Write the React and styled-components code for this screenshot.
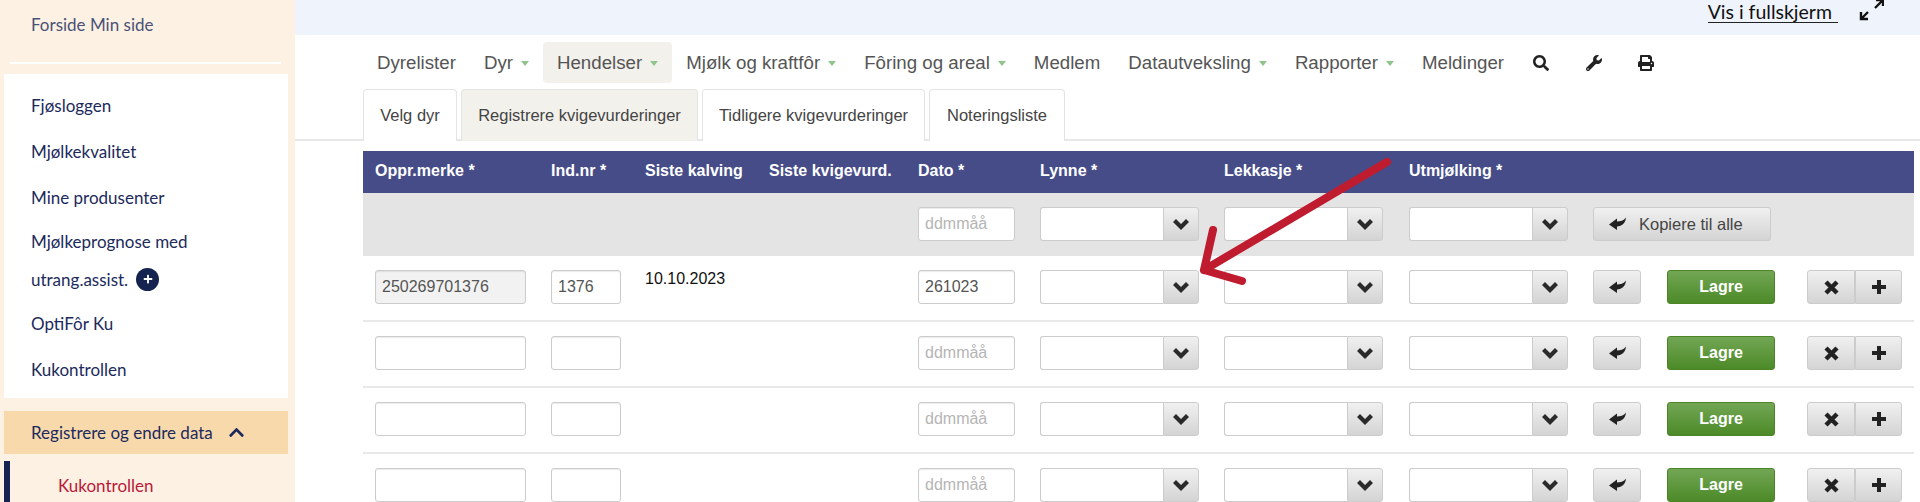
import React from "react";
import styled, { createGlobalStyle } from "styled-components";
import { FaSearch, FaWrench, FaPrint, FaPlus, FaChevronUp } from "react-icons/fa";

const GlobalStyle = createGlobalStyle`
  html, body { margin: 0; padding: 0; height: 100%; overflow: hidden; background: #fff; }
  * { box-sizing: border-box; }
`;

const Page = styled.div`
  position: relative;
  display: flex;
  width: 1920px;
  height: 502px;
  overflow: hidden;
  font-family: "Liberation Sans", Arial, sans-serif;
`;

// Sidebar
const Sidebar = styled.aside`
  width: 295px;
  flex-shrink: 0;
  background: #fdf1e3;
  padding: 0 7px 0 4px;
  font-family: Lato, "Noto Sans", sans-serif;
  font-size: 17px;
  color: #1c2a5c;
`;

const TopLink = styled.div`
  height: 62px;
  padding: 16px 0 0 27px;
  line-height: 18px;
  color: #4a5278;
`;

const Divider = styled.div`
  height: 2px;
  margin: 0 7px 10px 6px;
  background: #fff;
`;

const SideCard = styled.div`
  background: #fff;
  padding: 8px 0 0 27px;
  height: 324px;
  margin-bottom: 13px;
`;

const SideItem = styled.div`
  height: ${(p) => p.$h || 46}px;
  padding-bottom: ${(p) => p.$pb || 0}px;
  display: flex;
  align-items: center;
  gap: 8px;
`;

const PlusDot = styled.span`
  display: inline-flex;
  align-items: center;
  justify-content: center;
  width: 23px;
  height: 23px;
  border-radius: 50%;
  background: #14234f;
  color: #fff;
  font-size: 10px;
`;

const OpenGroup = styled.div`
  height: 43px;
  background: #f8d9ac;
  padding-left: 27px;
  display: flex;
  align-items: center;
  gap: 15px;
  margin-bottom: 7px;
`;

const ActiveItem = styled.div`
  height: 60px;
  border-left: 6px solid #14234f;
  padding: 14px 0 0 48px;
  color: #b8193a;
`;

// Main
const Main = styled.main`
  flex: 1;
  min-width: 0;
`;

const TopStrip = styled.div`
  height: 35px;
  background: #eef3fc;
  display: flex;
  justify-content: flex-end;
  align-items: flex-start;
  padding-right: 36px;
  gap: 20px;
`;

const FullscreenLink = styled.a`
  font-family: Lato, sans-serif;
  font-size: 19.5px;
  line-height: 24px;
  height: 23px;
  padding-right: 6px;
  color: #111;
  border-bottom: 1.5px solid #222;
  text-decoration: none;
`;

const NavBar = styled.nav`
  display: flex;
  align-items: center;
  height: 41px;
  margin: 7px 0 6px 68px;
  font-size: 18.7px;
  color: #555;
`;

const NavItem = styled.div`
  height: 41px;
  display: flex;
  align-items: center;
  gap: 8px;
  padding: 0 14px;
  border-radius: 4px;
  background: ${(p) => (p.$active ? "#f3f1ec" : "transparent")};
`;

const Caret = styled.span`
  width: 0;
  height: 0;
  border-left: 4.5px solid transparent;
  border-right: 4.5px solid transparent;
  border-top: 5px solid #8fc48a;
  margin-top: 2px;
`;

const NavIcon = styled.span`
  display: inline-flex;
  margin-left: ${(p) => p.$ml}px;
  color: #222;
  font-size: 16px;
`;

const TabBar = styled.div`
  display: flex;
  gap: 4px;
  height: 52px;
  padding-left: 68px;
  border-bottom: 2px solid #e8e8e8;
`;

const Tab = styled.div`
  height: 52px;
  width: ${(p) => p.$w}px;
  display: flex;
  align-items: center;
  justify-content: center;
  font-size: 16.5px;
  color: #444;
  background: ${(p) => (p.$active ? "#f3f1ec" : "#fff")};
  border: 1px solid #e4e4e4;
  border-bottom: none;
  border-radius: 4px 4px 0 0;
`;

const Table = styled.div`
  margin: 10px 6px 0 68px;
`;

const columns = "176px 94px 124px 149px 122px 184px 185px 184px 1fr";

const HeadRow = styled.div`
  display: grid;
  grid-template-columns: ${columns};
  height: 42px;
  padding: 0 0 2px 12px;
  align-items: center;
  background: #464c88;
  color: #fff;
  font-size: 16px;
  font-weight: bold;
`;

const Row = styled.div`
  display: grid;
  grid-template-columns: ${columns};
  height: ${(p) => (p.$gray ? 63 : 66)}px;
  padding: 14px 0 0 12px;
  align-items: start;
  background: ${(p) => (p.$gray ? "#e4e4e4" : "#fff")};
  border-bottom: ${(p) => (p.$gray ? "none" : "2px solid #e8e8e8")};
`;

const Input = styled.input`
  height: 34px;
  width: ${(p) => p.$w}px;
  padding: 0 6px;
  font: 16px "Liberation Sans", Arial, sans-serif;
  color: #555;
  background: ${(p) => (p.$readonly ? "#f2f2f2" : "#fff")};
  border: 1px solid #ccc;
  border-radius: 3px;
  box-shadow: inset 0 1px 1px rgba(0, 0, 0, 0.08);
  &::placeholder { color: #b5b5b5; opacity: 1; }
`;

const DateText = styled.div`
  font-size: 16px;
  color: #111;
  line-height: 18px;
`;

const SelectBox = styled.div`
  display: flex;
  width: 159px;
  height: 34px;
`;

const SelectInput = styled.div`
  flex: 1;
  background: #fff;
  border: 1px solid #ccc;
  border-right: none;
  border-radius: 3px 0 0 3px;
`;

const GrayButton = styled.button`
  display: inline-flex;
  align-items: center;
  justify-content: ${(p) => (p.$start ? "flex-start" : "center")};
  gap: 13px;
  height: 34px;
  width: ${(p) => p.$w}px;
  padding: 0 0 0 ${(p) => (p.$start ? 15 : 0)}px;
  flex-shrink: 0;
  font: 16.5px "Liberation Sans", Arial, sans-serif;
  color: #444;
  background: linear-gradient(#f0f0f0, #d4d4d4);
  border: 1px solid #ccc;
  border-radius: ${(p) => p.$radius || "3px"};
`;

const SaveButton = styled.button`
  height: 34px;
  width: 108px;
  margin: 0 32px 0 26px;
  flex-shrink: 0;
  font: bold 16px "Liberation Sans", Arial, sans-serif;
  color: #fff;
  background: linear-gradient(#72a654, #4c8a28);
  border: 1px solid #4c8428;
  border-radius: 3px;
`;

const Actions = styled.div`
  display: flex;
`;

const Arrow = styled.svg`
  position: absolute;
  left: 0;
  top: 0;
  pointer-events: none;
`;

// Glyph icons, drawn because the icon packs have thinner ones
const ChevronGlyph = () => (
  <svg width="16" height="11" viewBox="0 0 16 11" fill="#2a2a2a">
    <polygon points="0,3 3,0 8,5 13,0 16,3 8,11" />
  </svg>
);

const BackGlyph = () => (
  <svg width="17" height="14" viewBox="0 0 17 14" fill="#222">
    <path d="M0 7.5 L8 1.5 V4.5 C11 4.5 15 3.5 17 0.5 C16.5 6 13 9.5 8 9.5 V13 Z" />
  </svg>
);

const RemoveGlyph = () => (
  <svg width="15" height="15" viewBox="0 0 15 15" stroke="#222" strokeWidth="4.4" fill="none">
    <path d="M2 2 L13 13 M13 2 L2 13" />
  </svg>
);

const PlusGlyph = () => (
  <svg width="16" height="16" viewBox="0 0 16 16" stroke="#222" strokeWidth="4" fill="none">
    <path d="M8 1 V15 M1 8 H15" />
  </svg>
);

const Select = () => (
  <SelectBox>
    <SelectInput />
    <GrayButton $w={36} $radius="0 3px 3px 0">
      <ChevronGlyph />
    </GrayButton>
  </SelectBox>
);

const DataRow = ({ merke, nr, kalving, dato }) => (
  <Row>
    <Input $w={151} $readonly={!!merke} defaultValue={merke} />
    <Input $w={70} defaultValue={nr} />
    <DateText>{kalving}</DateText>
    <span />
    <Input $w={97} placeholder="ddmmåå" defaultValue={dato} />
    <Select />
    <Select />
    <Select />
    <Actions>
      <GrayButton $w={48}><BackGlyph /></GrayButton>
      <SaveButton>Lagre</SaveButton>
      <GrayButton $w={48} $radius="3px 0 0 3px"><RemoveGlyph /></GrayButton>
      <GrayButton $w={47} $radius="0 3px 3px 0"><PlusGlyph /></GrayButton>
    </Actions>
  </Row>
);

const App = () => (
  <Page>
    <GlobalStyle />
    <Sidebar>
      <TopLink>Forside Min side</TopLink>
      <Divider />
      <SideCard>
        <SideItem>Fjøsloggen</SideItem>
        <SideItem>Mjølkekvalitet</SideItem>
        <SideItem>Mine produsenter</SideItem>
        <SideItem $h={42}>Mjølkeprognose med</SideItem>
        <SideItem $h={38} $pb={4}>utrang.assist. <PlusDot><FaPlus /></PlusDot></SideItem>
        <SideItem>OptiFôr Ku</SideItem>
        <SideItem>Kukontrollen</SideItem>
      </SideCard>
      <OpenGroup>Registrere og endre data <FaChevronUp size={17} /></OpenGroup>
      <ActiveItem>Kukontrollen</ActiveItem>
    </Sidebar>
    <Main>
      <TopStrip>
        <FullscreenLink>Vis i fullskjerm</FullscreenLink>
        <svg width="26" height="22" viewBox="0 0 26 22" fill="none" stroke="#111" strokeWidth="2.4">
          <path d="M3 19 L10 12 M3 12 V19 H10 M17 8 L24 1 M18 0 H25 V6" />
        </svg>
      </TopStrip>
      <NavBar>
        <NavItem>Dyrelister</NavItem>
        <NavItem>Dyr <Caret /></NavItem>
        <NavItem $active>Hendelser <Caret /></NavItem>
        <NavItem>Mjølk og kraftfôr <Caret /></NavItem>
        <NavItem>Fôring og areal <Caret /></NavItem>
        <NavItem>Medlem</NavItem>
        <NavItem>Datautveksling <Caret /></NavItem>
        <NavItem>Rapporter <Caret /></NavItem>
        <NavItem>Meldinger</NavItem>
        <NavIcon $ml={15}><FaSearch /></NavIcon>
        <NavIcon $ml={37}><FaWrench /></NavIcon>
        <NavIcon $ml={36}><FaPrint /></NavIcon>
      </NavBar>
      <TabBar>
        <Tab $w={94}>Velg dyr</Tab>
        <Tab $w={237} $active>Registrere kvigevurderinger</Tab>
        <Tab $w={223}>Tidligere kvigevurderinger</Tab>
        <Tab $w={136}>Noteringsliste</Tab>
      </TabBar>
      <Table>
        <HeadRow>
          <span>Oppr.merke *</span>
          <span>Ind.nr *</span>
          <span>Siste kalving</span>
          <span>Siste kvigevurd.</span>
          <span>Dato *</span>
          <span>Lynne *</span>
          <span>Lekkasje *</span>
          <span>Utmjølking *</span>
        </HeadRow>
        <Row $gray>
          <span />
          <span />
          <span />
          <span />
          <Input $w={97} placeholder="ddmmåå" />
          <Select />
          <Select />
          <Select />
          <GrayButton $w={178} $start><BackGlyph /> Kopiere til alle</GrayButton>
        </Row>
        <DataRow merke="250269701376" nr="1376" kalving="10.10.2023" dato="261023" />
        <DataRow />
        <DataRow />
        <DataRow />
      </Table>
    </Main>
    <Arrow width="1920" height="502" fill="none" stroke="#c01c30" strokeWidth="8" strokeLinecap="round" strokeLinejoin="round">
      <path d="M1387 162 L1204 270 M1213 230 L1204 270 L1242 281" />
    </Arrow>
  </Page>
);

export default App;
